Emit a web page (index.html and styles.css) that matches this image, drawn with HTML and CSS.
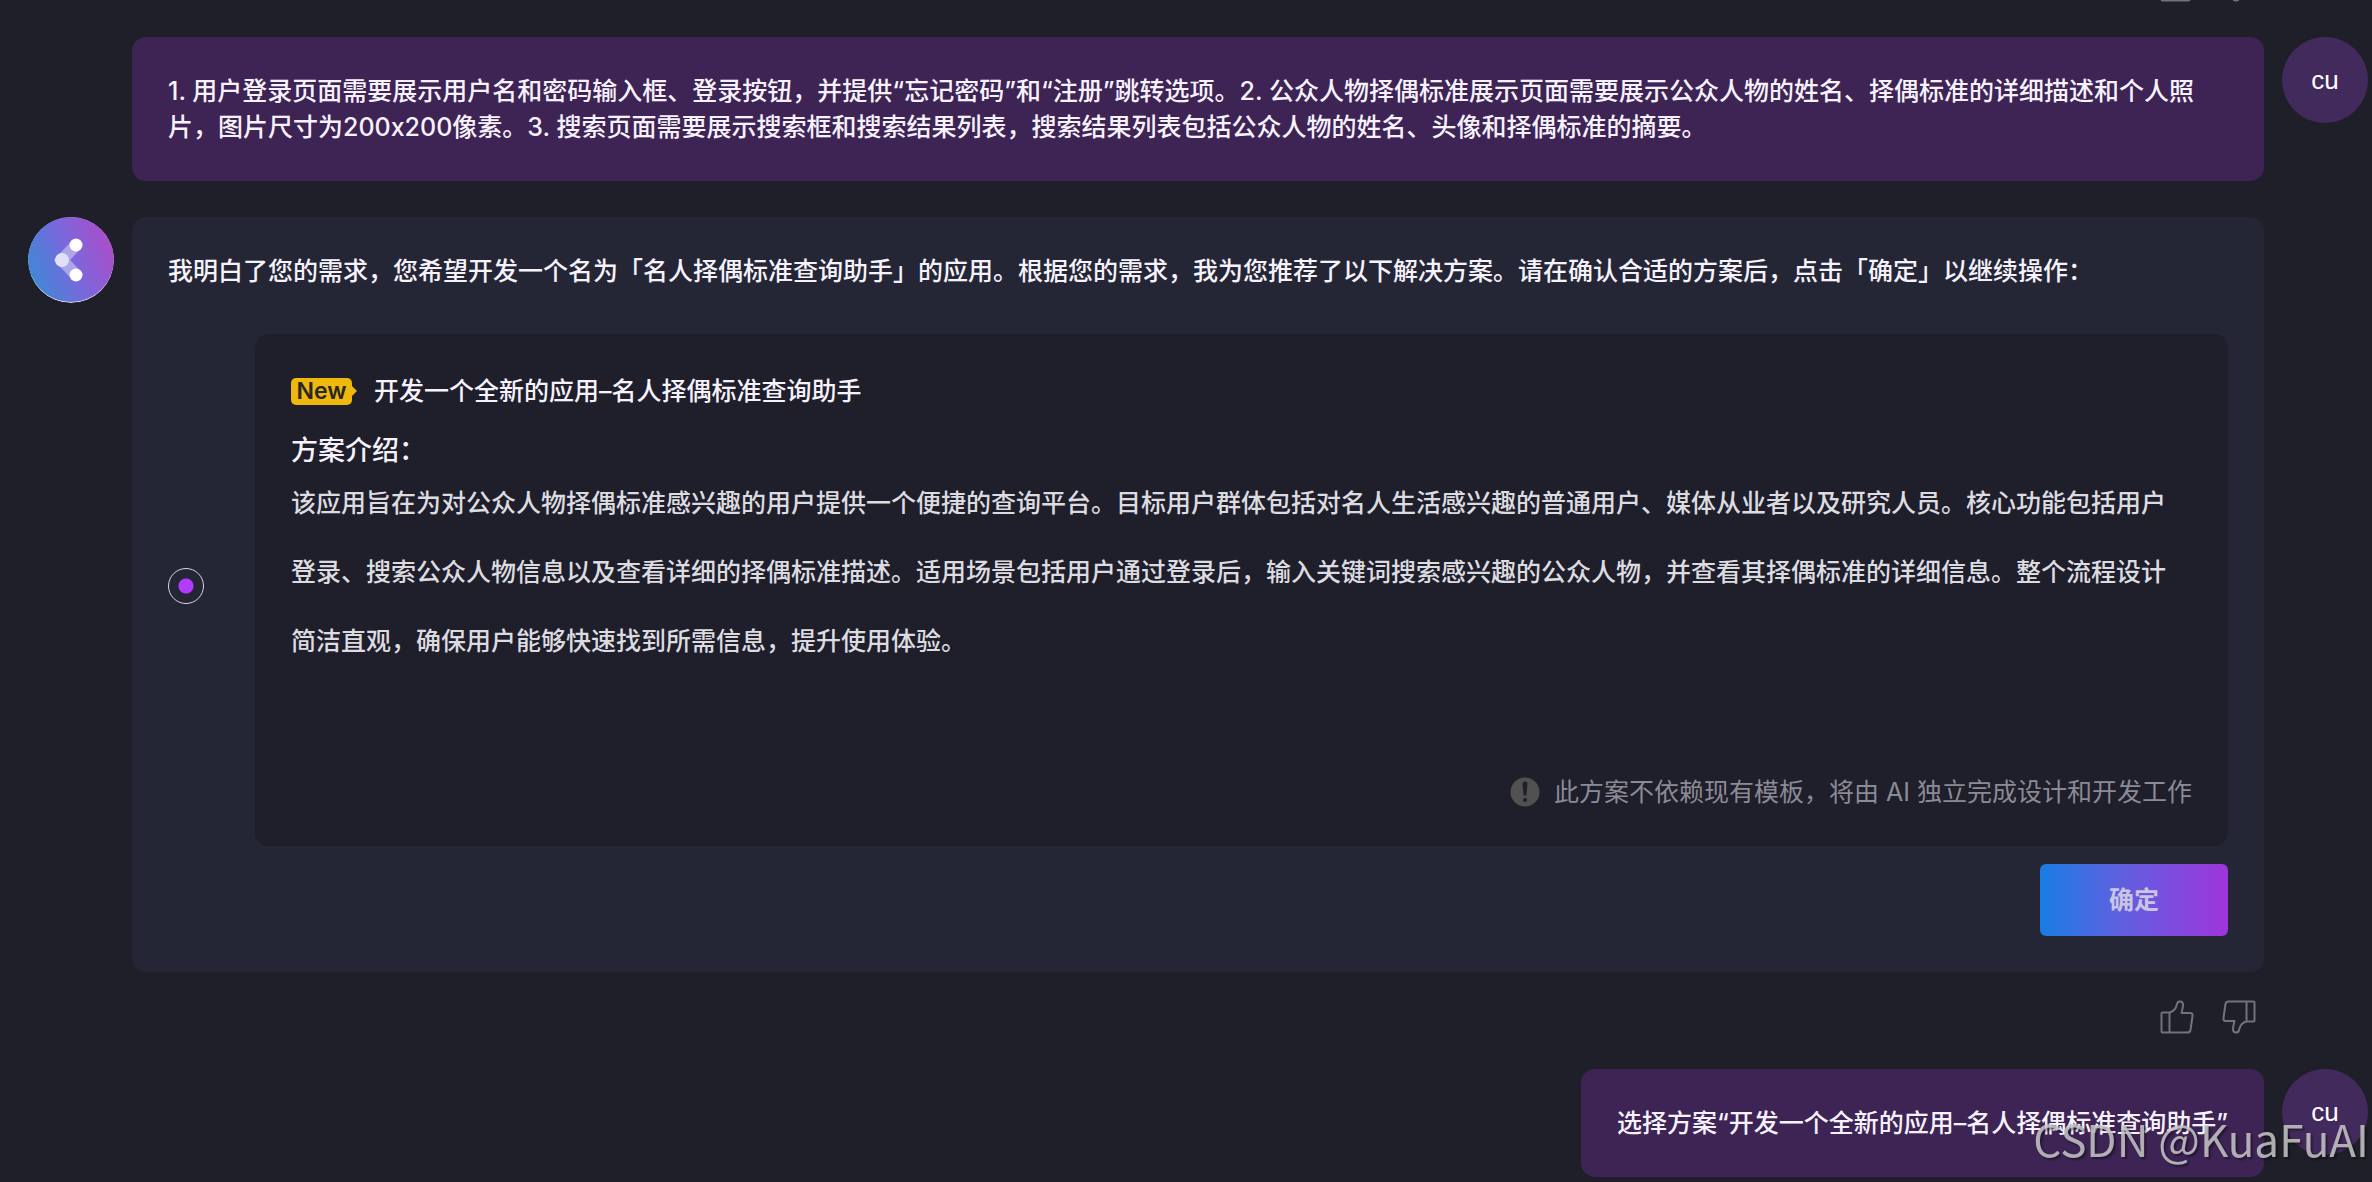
FILE: index.html
```html
<!DOCTYPE html>
<html lang="zh-CN">
<head>
    <meta charset="UTF-8">
    <meta name="viewport" content="width=device-width, initial-scale=1.0">
    <title>chat</title>
    <link rel="stylesheet" href="styles.css">
</head>
<body>
    <!-- icons used more than once -->
    <svg class="sprite" aria-hidden="true">
      <symbol id="thumb" viewBox="0 0 34 34">
        <path d="M2.500 12.500h7v20h-7q-1 0-1-1v-18q0-1 1-1zM9.500 12.500c4.500-1 6.500-4 7.500-8.500c.6-3.500 6-3.500 6 .8c0 3-.8 5.500-1.500 8.200h8.500q3 0 2.500 3l-2 14q-.4 2.500-3 2.500h-18"/>
      </symbol>
    </svg>

    <main class="chat">
      <div class="feedback">
        <button type="button" aria-label="赞"><svg><use href="#thumb"/></svg></button>
        <button type="button" class="down" aria-label="踩"><svg><use href="#thumb"/></svg></button>
      </div>

      <div class="message user">
        <div class="bubble wide">
          <p>1. 用户登录页面需要展示用户名和密码输入框、登录按钮，并提供“忘记密码”和“注册”跳转选项。2. 公众人物择偶标准展示页面需要展示公众人物的姓名、择偶标准的详细描述和个人照<br>片，图片尺寸为200x200像素。3. 搜索页面需要展示搜索框和搜索结果列表，搜索结果列表包括公众人物的姓名、头像和择偶标准的摘要。</p>
        </div>
        <div class="avatar">cu</div>
      </div>

      <div class="message assistant">
        <svg class="logo" viewBox="0 0 86 86">
          <defs>
            <linearGradient id="logoFill" x1="0" y1="0.7" x2="1" y2="0.3">
              <stop offset="0" stop-color="#3b8ad6"/>
              <stop offset="0.5" stop-color="#7a68dc"/>
              <stop offset="1" stop-color="#ad4cc8"/>
            </linearGradient>
          </defs>
          <circle cx="43" cy="43" r="43" fill="#dfe0f4"/>
          <circle cx="43" cy="42" r="43" fill="url(#logoFill)"/>
          <path d="M48 28L34 43L48 58" fill="none" stroke="#fff" stroke-opacity="0.4" stroke-width="12"/>
          <circle cx="34" cy="43" r="7" fill="#e2e0f8"/>
          <circle cx="48" cy="28" r="6.500" fill="#fff"/>
          <circle cx="48" cy="58" r="6.500" fill="#fff"/>
        </svg>
        <form class="bubble wide">
          <p>我明白了您的需求，您希望开发一个名为「名人择偶标准查询助手」的应用。根据您的需求，我为您推荐了以下解决方案。请在确认合适的方案后，点击「确定」以继续操作：</p>
          <div class="option">
            <input type="radio" name="plan" id="plan" checked>
            <label class="plan" for="plan">
              <span class="title">
                <span class="badge">New</span>
                开发一个全新的应用–名人择偶标准查询助手
              </span>
              <span class="subtitle">方案介绍：</span>
              <span class="desc">该应用旨在为对公众人物择偶标准感兴趣的用户提供一个便捷的查询平台。目标用户群体包括对名人生活感兴趣的普通用户、媒体从业者以及研究人员。核心功能包括用户<br>登录、搜索公众人物信息以及查看详细的择偶标准描述。适用场景包括用户通过登录后，输入关键词搜索感兴趣的公众人物，并查看其择偶标准的详细信息。整个流程设计<br>简洁直观，确保用户能够快速找到所需信息，提升使用体验。</span>
              <span class="note">
                <svg viewBox="0 0 30 30">
                  <circle cx="15" cy="15" r="14.500" fill="#515151"/>
                  <path d="M12.500 7q0-2.500 2.500-2.500t2.500 2.500l-1.200 11.500h-2.600z" fill="#1f1e2b"/>
                  <circle cx="15" cy="23" r="2" fill="#1f1e2b"/>
                </svg>
                此方案不依赖现有模板，将由 AI 独立完成设计和开发工作
              </span>
            </label>
          </div>
          <button type="button" class="confirm">确定</button>
        </form>
      </div>

      <div class="feedback">
        <button type="button" aria-label="赞"><svg><use href="#thumb"/></svg></button>
        <button type="button" class="down" aria-label="踩"><svg><use href="#thumb"/></svg></button>
      </div>

      <div class="message user">
        <div class="bubble">
          <p>选择方案“开发一个全新的应用–名人择偶标准查询助手”</p>
        </div>
        <div class="avatar">cu</div>
      </div>
    </main>

    <div class="watermark">CSDN @KuaFuAI</div>
</body>
</html>
```

FILE: styles.css
```css
* {
  box-sizing: border-box;
}

body {
  margin: 0;
  overflow: hidden;
  background-color: #1f1f2a;
  color: #f6f2fb;
  font-family: Inter, "Noto Sans CJK SC", sans-serif;
  font-size: 25px;
  line-height: 36px;
}

p {
  margin: 0;
}

.sprite {
  position: absolute;
  width: 0;
  height: 0;
}

/* The list is scrolled, the first row is nearly out of view */
.chat {
  margin-top: -32px;
  padding: 0 4px 4px 28px;
}

/* Messages */
.message {
  display: flex;
  align-items: flex-start;
  gap: 18px;
}

.user {
  justify-content: flex-end;
  padding-left: 104px;
}

.assistant {
  margin-top: 36px;
  padding-right: 104px;
}

.bubble {
  padding: 36px;
  border-radius: 14px;
  font-weight: 500;
}

.wide {
  flex: 1;
}

.user .bubble {
  background-color: #3e2355;
}

.assistant .bubble {
  background-color: #242635;
}

.avatar, .logo {
  flex: none;
  width: 86px;
  height: 86px;
  border-radius: 50%;
}

.avatar {
  background-color: #432a5c;
  color: white;
  font-family: "Liberation Sans", sans-serif;
  font-size: 26px;
  line-height: 86px;
  text-align: center;
}

/* Thumbs up / down */
.feedback {
  display: flex;
  justify-content: flex-end;
  gap: 28px;
  margin: 28px 0 35px;
  padding-right: 112px;
}

.feedback:first-child {
  margin-top: 0;
}

.feedback button {
  width: 34px;
  height: 34px;
  padding: 0;
  border: none;
  background: none;
  cursor: pointer;
}

.feedback svg {
  display: block;
  width: 34px;
  height: 34px;
  fill: none;
  stroke: #727278;
  stroke-width: 2;
  stroke-linejoin: round;
}

.feedback .down {
  transform: rotate(180deg);
}

/* Plan to choose */
.option {
  display: flex;
  align-items: center;
  gap: 51px;
  margin-top: 36px;
}

.option input {
  appearance: none;
  flex: none;
  width: 36px;
  height: 36px;
  margin: 0;
  border: 1px solid #d8d8e0;
  border-radius: 50%;
  background: radial-gradient(circle, #b13cff 7px, transparent 8px);
}

.plan {
  flex: 1;
  display: flex;
  flex-direction: column;
  min-height: 512px;
  margin-top: 9px;
  padding: 36px;
  border-radius: 14px;
  background-color: #1f1e2b;
}

.title {
  display: flex;
  align-items: center;
  gap: 18px;
  height: 42px;
}

.badge {
  position: relative;
  width: 61px;
  margin-right: 4px;
  border-radius: 5px;
  background-color: #efb80c;
  color: #2a2620;
  font-size: 23px;
  font-weight: 600;
  line-height: 27px;
  text-align: center;
}

.badge::after {
  content: "";
  position: absolute;
  top: 8px;
  left: 100%;
  border: 5px solid transparent;
  border-left-color: #efb80c;
  border-right: none;
}

.subtitle {
  margin-top: 21px;
  font-size: 27px;
}

.desc {
  color: #dcdce0;
  line-height: 69px;
}

.note {
  display: flex;
  align-items: center;
  align-self: flex-end;
  gap: 14px;
  margin-top: auto;
  color: #8b8b96;
  font-weight: 400;
}

.note svg {
  width: 30px;
  height: 30px;
}

.confirm {
  display: block;
  width: 188px;
  height: 72px;
  margin: 18px 0 0 auto;
  border: none;
  border-radius: 6px;
  background: linear-gradient(90deg, #187de4, #5b62e0 40%, #9f35dc);
  color: #c9c4e4;
  font: inherit;
  font-weight: bold;
  cursor: pointer;
}

.watermark {
  position: fixed;
  right: 3px;
  bottom: 12px;
  color: rgba(200, 200, 200, 0.85);
  font-family: "Noto Sans CJK SC", sans-serif;
  font-size: 44px;
  line-height: 64px;
  text-shadow: 2px 2px 2px rgba(0, 0, 0, 0.4);
}
```
